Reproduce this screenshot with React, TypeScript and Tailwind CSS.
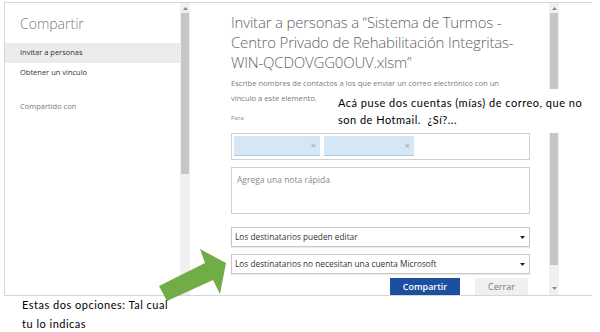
import React from "react";

const ui = { fontFamily: '"Open Sans", "Noto Sans", sans-serif' };
const note = { fontFamily: 'Lato, "Open Sans", sans-serif' };

const Tri: React.FC<{ down?: boolean; color?: string }> = ({ down, color = "#8a8a8a" }) => (
  <svg width="5" height="3" viewBox="0 0 5 3">
    <polygon points={down ? "0,0 5,0 2.5,3" : "0,3 5,3 2.5,0"} fill={color} />
  </svg>
);

const Chip: React.FC<{ w: string }> = ({ w }) => (
  <div className={`${w} h-[20px] bg-[#d5e6f4] border-b border-[#a9c9e6] flex items-center justify-end pr-[4px]`}>
    <span className="text-[9px] leading-none text-[#9aa6b0]">×</span>
  </div>
);

const Select: React.FC<{ label: string }> = ({ label }) => (
  <div className="h-[20px] border border-[#c8c8c8] bg-white flex items-center justify-between pl-[3px] pr-[4px] shadow-[0_1px_1px_rgba(0,0,0,0.08)]">
    <span className="text-[8.3px] text-[#333]">{label}</span>
    <Tri down color="#222" />
  </div>
);

const App: React.FC = () => {
  return (
    <div className="relative w-[600px] h-[332px] bg-white overflow-hidden" style={ui}>
      {/* marco del panel */}
      <div className="mt-[2px] ml-[4px] w-[588px] h-[294px] border-t border-l border-b border-[#d6d6d6] flex overflow-hidden">
        {/* panel izquierdo */}
        <div className="w-[175px] flex flex-col">
          <div className="pt-[11px] pl-[15px] text-[14px] leading-[20px] font-light text-[#7a7a7a]">Compartir</div>
          <div className="mt-[9px] h-[20px] bg-[#ebebeb] pl-[15px] flex items-center text-[7.5px] text-[#333]">
            Invitar a personas
          </div>
          <div className="h-[20px] pl-[15px] flex items-center text-[7.5px] text-[#333]">Obtener un vínculo</div>
          <div className="mt-[14px] h-[20px] pl-[15px] flex items-center text-[7.5px] text-[#777]">Compartido con</div>
        </div>

        {/* scroll izquierdo */}
        <div className="w-[10px] bg-[#f0f0f0] flex flex-col items-center">
          <div className="h-[10px] flex items-center">
            <Tri />
          </div>
          <div className="w-[8px] h-[161px] bg-[#c6c6c6]" />
        </div>

        {/* contenido */}
        <div className="ml-[41px] w-[299px] flex flex-col">
          <div className="pt-[9px] text-[15px] leading-[20px] font-light text-[#636363] tracking-[-0.2px]">
            Invitar a personas a “Sistema de Turmos -<br />
            Centro Privado de Rehabilitación Integritas-<br />
            WIN-QCDOVGG0OUV.xlsm”
          </div>
          <div className="mt-[4px] text-[7.6px] leading-[15px] text-[#7a7a7a]">
            Escribe nombres de contactos a los que enviar un correo electrónico con un
            <br />
            vínculo a este elemento.
          </div>
          <div className="mt-[6px] text-[6px] leading-[12px] text-[#888]">Para</div>
          <div className="mt-[9px] h-[27px] border border-[#d0d0d0] flex items-center gap-[4px] px-[2px]">
            <Chip w="w-[86px]" />
            <Chip w="w-[90px]" />
          </div>
          <div className="mt-[7px] h-[48px] border border-[#d0d0d0] px-[5px] pt-[6px] text-[8.5px] leading-[12px] text-[#8a8a8a]">
            Agrega una nota rápida
          </div>
          <div className="mt-[13px]">
            <Select label="Los destinatarios pueden editar" />
          </div>
          <div className="mt-[7px]">
            <Select label="Los destinatarios no necesitan una cuenta Microsoft" />
          </div>
          <div className="mt-[4px] flex justify-end gap-[15px] pr-[2px]">
            <button className="w-[70px] h-[17px] bg-[#1c4f9f] text-white text-[9px] font-semibold pt-[1px]">Compartir</button>
            <button className="w-[53px] h-[17px] bg-[#f0f0f0] text-[#777] text-[9px] pt-[1px]">Cerrar</button>
          </div>
        </div>

        {/* scroll derecho */}
        <div className="ml-[19px] w-[10px] bg-[#f0f0f0] flex flex-col items-center">
          <div className="h-[10px] flex items-center">
            <Tri />
          </div>
          <div className="w-[8px] h-[252px] bg-[#c6c6c6]" />
          <div className="flex-1" />
          <div className="h-[10px] flex items-center mb-[2px]">
            <Tri down />
          </div>
        </div>
      </div>

      {/* nota sobre las cuentas */}
      <div
        className="absolute left-[329px] top-[89px] w-[262px] h-[44px] bg-white pl-[9px] pt-[5px] text-[11px] leading-[17px] text-black tracking-[0.5px]"
        style={note}
      >
        Acá puse dos cuentas (mías) de correo, que no
        <br />
        son de Hotmail.&nbsp; ¿Sí?...
      </div>

      {/* flecha verde */}
      <svg className="absolute left-[150px] top-[244px]" width="80" height="62" viewBox="0 0 80 62">
        <polygon points="9,42 55,19 50,5 76,19 70,50 63,36 17,57" fill="#70ad47" />
      </svg>

      {/* nota inferior */}
      <div className="absolute left-[22px] top-[295px] text-[11px] leading-[19px] text-black tracking-[0.5px]" style={note}>
        Estas dos opciones: Tal cual
        <br />
        tu lo indicas
      </div>
    </div>
  );
};

export default App;
